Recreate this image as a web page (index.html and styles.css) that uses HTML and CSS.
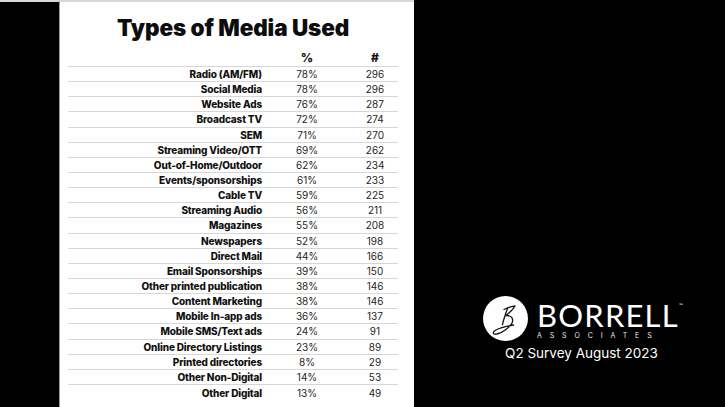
FILE: index.html
```html
<!DOCTYPE html>
<html lang="en">
<head>
<meta charset="utf-8">
<title>Types of Media Used</title>
<link rel="stylesheet" href="styles.css">
</head>
<body>
<div class="slide">
  <div class="gutter"></div>
  <main class="panel">
    <h1 class="title">Types of Media Used</h1>
    <div class="table">
      <div class="row head"><span class="lab"></span><span class="num">%</span><span class="num">#</span></div>
      <div class="row"><span class="lab">Radio (AM/FM)</span><span class="num">78%</span><span class="num">296</span></div>
      <div class="row"><span class="lab">Social Media</span><span class="num">78%</span><span class="num">296</span></div>
      <div class="row"><span class="lab">Website Ads</span><span class="num">76%</span><span class="num">287</span></div>
      <div class="row"><span class="lab">Broadcast TV</span><span class="num">72%</span><span class="num">274</span></div>
      <div class="row"><span class="lab">SEM</span><span class="num">71%</span><span class="num">270</span></div>
      <div class="row"><span class="lab">Streaming Video/OTT</span><span class="num">69%</span><span class="num">262</span></div>
      <div class="row"><span class="lab">Out-of-Home/Outdoor</span><span class="num">62%</span><span class="num">234</span></div>
      <div class="row"><span class="lab">Events/sponsorships</span><span class="num">61%</span><span class="num">233</span></div>
      <div class="row"><span class="lab">Cable TV</span><span class="num">59%</span><span class="num">225</span></div>
      <div class="row"><span class="lab">Streaming Audio</span><span class="num">56%</span><span class="num">211</span></div>
      <div class="row"><span class="lab">Magazines</span><span class="num">55%</span><span class="num">208</span></div>
      <div class="row"><span class="lab">Newspapers</span><span class="num">52%</span><span class="num">198</span></div>
      <div class="row"><span class="lab">Direct Mail</span><span class="num">44%</span><span class="num">166</span></div>
      <div class="row"><span class="lab">Email Sponsorships</span><span class="num">39%</span><span class="num">150</span></div>
      <div class="row"><span class="lab">Other printed publication</span><span class="num">38%</span><span class="num">146</span></div>
      <div class="row"><span class="lab">Content Marketing</span><span class="num">38%</span><span class="num">146</span></div>
      <div class="row"><span class="lab">Mobile In-app ads</span><span class="num">36%</span><span class="num">137</span></div>
      <div class="row"><span class="lab">Mobile SMS/Text ads</span><span class="num">24%</span><span class="num">91</span></div>
      <div class="row"><span class="lab">Online Directory Listings</span><span class="num">23%</span><span class="num">89</span></div>
      <div class="row"><span class="lab">Printed directories</span><span class="num">8%</span><span class="num">29</span></div>
      <div class="row"><span class="lab">Other Non-Digital</span><span class="num">14%</span><span class="num">53</span></div>
      <div class="row last"><span class="lab">Other Digital</span><span class="num">13%</span><span class="num">49</span></div>
    </div>
  </main>
  <aside class="brand">
    <div class="logo">
      <svg class="mark" viewBox="0 0 45 45" width="45" height="45" aria-hidden="true">
        <circle cx="22.5" cy="22.5" r="22.5" fill="#fff"/>
        <path d="M21 13.5 C25 11.5 29 10.3 32 9.8 C30.5 13 27 16.5 23 19.5 C28 19.2 31 22.5 29 27 C27 31 20 36.5 14 38 C9.5 39 9 36 13 34 C18 31.5 25 30 30.5 29" fill="none" stroke="#111" stroke-width="1.3" stroke-linecap="round" stroke-linejoin="round"/>
        <path d="M24.5 12.5 C22.5 18 20.5 23.5 19.5 28.5" fill="none" stroke="#111" stroke-width="1.3" stroke-linecap="round"/>
      </svg>
      <div class="wordmark">
        <div class="name">BORRELL<span class="tm">™</span></div>
        <div class="assoc">ASSOCIATES</div>
      </div>
    </div>
    <div class="caption">Q2 Survey August 2023</div>
  </aside>
</div>
</body>
</html>
```

FILE: styles.css
```css
* { box-sizing: border-box; }
html, body { margin: 0; padding: 0; background: #000; }
body { width: 725px; height: 407px; overflow: hidden; font-family: "Inter", "Liberation Sans", sans-serif; }

.slide { display: flex; width: 725px; height: 407px; }

.gutter {
  width: 60px;
  border-top: 2px solid #d8d8d8;
  border-right: 1px solid #9a9a9a;
  background: #000;
}

.panel {
  width: 354px;
  background: #fff;
  border-top: 2px solid #d8d8d8;
  padding: 13px 16px 0 8px;
  display: flex;
  flex-direction: column;
}

.title {
  margin: 0 0 9px;
  text-align: center;
  font-size: 22.5px;
  line-height: 26px;
  font-weight: 900;
  letter-spacing: -0.1px;
  color: #0d0d0d;
}

.table { width: 330px; }

.row {
  display: grid;
  grid-template-columns: 194px 90px 46px;
  height: 15.15px;
  align-items: center;
  border-bottom: 1px solid #d6d6d6;
  font-size: 10px;
  line-height: 14px;
  color: #111;
}
.row.head { height: 17px; font-size: 12px; }
.row.last { border-bottom: none; }

.lab { text-align: right; font-weight: 800; white-space: nowrap; letter-spacing: -0.15px; }
.num { text-align: center; font-weight: 400; color: #262626; }
.head .num { font-weight: 800; color: #111; }

.brand {
  flex: 1;
  display: flex;
  flex-direction: column;
  align-items: flex-start;
  padding: 296px 0 0 69px;
}

.logo { display: flex; align-items: center; }
.mark { display: block; }
.wordmark { margin-left: 9px; color: #fff; margin-top: 4px; }
.name {
  font-family: "Lato", "Liberation Sans", sans-serif;
  font-weight: 400;
  font-size: 31px;
  line-height: 26px;
  letter-spacing: 1.2px;
  position: relative;
}
.tm { position: absolute; font-size: 5px; line-height: 5px; top: 1px; right: -4px; letter-spacing: 0; }
.assoc {
  font-size: 7px;
  line-height: 9px;
  letter-spacing: 7.9px;
  margin-top: 3px;
  color: #e8e8e8;
}
.caption {
  width: 197px;
  text-align: center;
  margin-top: 4px;
  color: #fff;
  font-size: 13.5px;
  line-height: 16px;
}
```
